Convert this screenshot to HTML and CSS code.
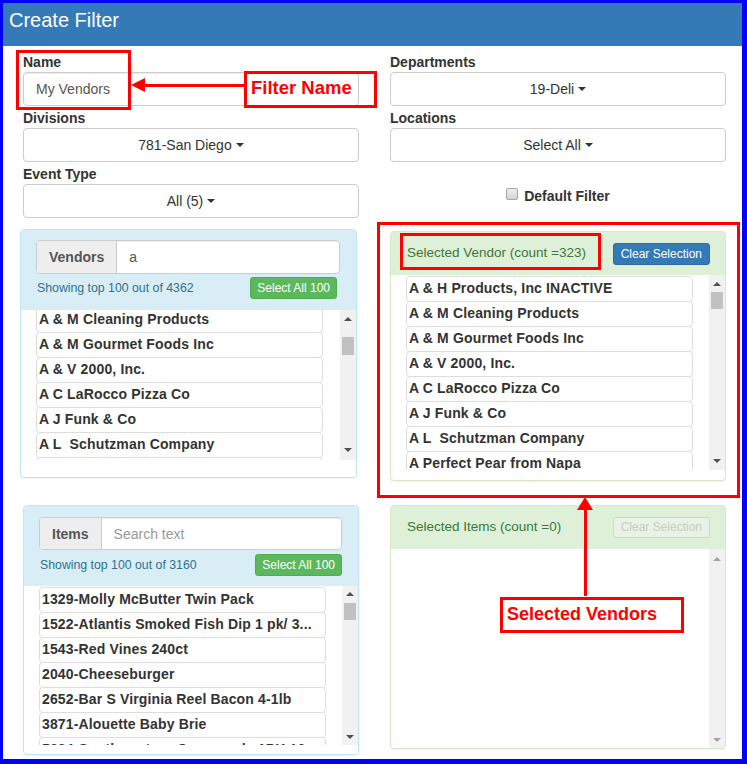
FILE: index.html
```html
<!DOCTYPE html>
<html>
<head>
<meta charset="utf-8">
<title>Create Filter</title>
<link rel="stylesheet" href="styles.css">
</head>
<body>
<div class="frame">
  <div class="hdr">Create Filter</div>
  <div class="content">
    <div class="field">
      <label class="lbl">Name</label>
      <div class="ctl txt">My Vendors</div>
    </div>
    <div class="field">
      <label class="lbl">Departments</label>
      <div class="ctl dd">19-Deli<span class="caret"></span></div>
    </div>
    <div class="field">
      <label class="lbl">Divisions</label>
      <div class="ctl dd">781-San Diego<span class="caret"></span></div>
    </div>
    <div class="field">
      <label class="lbl">Locations</label>
      <div class="ctl dd">Select All<span class="caret"></span></div>
    </div>
    <div class="field">
      <label class="lbl">Event Type</label>
      <div class="ctl dd">All (5)<span class="caret"></span></div>
    </div>
    <div class="deffilter"><span class="cbox"></span>Default Filter</div>

    <div class="panel p-info vend">
      <div class="search">
        <div class="ig"><span class="addon">Vendors</span><span class="ig-in">a</span></div>
        <div class="info"><span>Showing top 100 out of 4362</span><span class="btn-s btn-g">Select All 100</span></div>
      </div>
      <div class="lb">
        <div class="lcol">
          <div class="li">A &amp; M Cleaning Products</div>
          <div class="li">A &amp; M Gourmet Foods Inc</div>
          <div class="li">A &amp; V 2000, Inc.</div>
          <div class="li">A C LaRocco Pizza Co</div>
          <div class="li">A J Funk &amp; Co</div>
          <div class="li">A L&nbsp; Schutzman Company</div>
          <div class="li">A Perfect Pear from Napa</div>
        </div>
        <div class="sb"><span class="up"></span><span class="thumb"></span><span class="dn"></span></div>
      </div>
    </div>

    <div class="panel p-succ selv">
      <div class="sh"><span>Selected Vendor (count =323)</span><span class="btn-s btn-b">Clear Selection</span></div>
      <div class="lb">
        <div class="lcol">
          <div class="li">A &amp; H Products, Inc INACTIVE</div>
          <div class="li">A &amp; M Cleaning Products</div>
          <div class="li">A &amp; M Gourmet Foods Inc</div>
          <div class="li">A &amp; V 2000, Inc.</div>
          <div class="li">A C LaRocco Pizza Co</div>
          <div class="li">A J Funk &amp; Co</div>
          <div class="li">A L&nbsp; Schutzman Company</div>
          <div class="li">A Perfect Pear from Napa</div>
          <div class="li">A Taste of Europe</div>
        </div>
        <div class="sb"><span class="up"></span><span class="thumb"></span><span class="dn"></span></div>
      </div>
    </div>

    <div class="panel p-info items">
      <div class="search">
        <div class="ig"><span class="addon">Items</span><span class="ig-in ph">Search text</span></div>
        <div class="info"><span>Showing top 100 out of 3160</span><span class="btn-s btn-g">Select All 100</span></div>
      </div>
      <div class="lb">
        <div class="lcol">
          <div class="li">1329-Molly McButter Twin Pack</div>
          <div class="li">1522-Atlantis Smoked Fish Dip 1 pk/ 3...</div>
          <div class="li">1543-Red Vines 240ct</div>
          <div class="li">2040-Cheeseburger</div>
          <div class="li">2652-Bar S Virginia Reel Bacon 4-1lb</div>
          <div class="li">3871-Alouette Baby Brie</div>
          <div class="li">5624-Southwestern Guacamole 1PK 10...</div>
        </div>
        <div class="sb"><span class="up"></span><span class="thumb"></span><span class="dn"></span></div>
      </div>
    </div>

    <div class="panel p-succ seli">
      <div class="sh"><span>Selected Items (count =0)</span><span class="btn-s btn-dis">Clear Selection</span></div>
      <div class="lb">
        <div class="lcol"></div>
        <div class="sb sb-off"><span class="up"></span><span class="dn"></span></div>
      </div>
    </div>
  </div>

  <div class="ann a-name"></div>
  <div class="arrow-h-line"></div>
  <div class="arrow-h-head"></div>
  <div class="ann a-fname">Filter Name</div>

  <div class="ann a-big"></div>
  <div class="ann a-small"></div>
  <div class="arrow-v-head"></div>
  <div class="arrow-v-line"></div>
  <div class="ann a-selv">Selected Vendors</div>
</div>
</body>
</html>
```

FILE: styles.css
```css
* { box-sizing: border-box; }

body {
  margin: 0;
  font-family: "Liberation Sans", Arial, sans-serif;
  font-size: 14px;
  color: #333;
  background: #fff;
}

.frame {
  position: relative;
  width: 747px;
  height: 764px;
  border-style: solid;
  border-color: #0000ff;
  border-width: 3px 5px 5px 3px;
  overflow: hidden;
  background: #fff;
}

.hdr {
  height: 43px;
  background: #337ab7;
  color: #fff;
  font-size: 20px;
  line-height: 22px;
  padding: 6px 6px 0;
}

.content {
  display: grid;
  grid-template-columns: 336px 336px;
  column-gap: 31px;
  padding: 6px 0 0 20px;
  align-items: start;
}

.field { margin-bottom: 2px; }

.lbl {
  display: block;
  font-weight: bold;
  line-height: 20px;
  height: 20px;
}

.ctl {
  height: 34px;
  border: 1px solid #ccc;
  border-radius: 4px;
  background: #fff;
}

.txt {
  padding: 0 12px;
  line-height: 32px;
  color: #555;
  box-shadow: inset 0 1px 1px rgba(0,0,0,.075);
}

.dd {
  display: flex;
  align-items: center;
  justify-content: center;
  color: #333;
}

.caret {
  display: inline-block;
  width: 0;
  height: 0;
  border-top: 4px solid #333;
  border-left: 4px solid transparent;
  border-right: 4px solid transparent;
  margin-left: 4px;
}

.deffilter {
  height: 54px;
  padding-top: 22px;
  display: flex;
  justify-content: center;
  align-items: flex-start;
  line-height: 20px;
  font-weight: bold;
}

.cbox {
  width: 12px;
  height: 12px;
  border: 1px solid #a6a6a6;
  border-radius: 2px;
  background: linear-gradient(#eeeeee, #d4d4d4);
  margin: 2px 6px 0 0;
}

/* panels */
.panel {
  border: 1px solid;
  border-radius: 4px;
  background: #fff;
  overflow: hidden;
  box-shadow: 0 1px 1px rgba(0,0,0,.05);
}
.p-info { border-color: #bce8f1; }
.p-succ { border-color: #d6e9c6; }

.vend { margin: 9px 0 0 -3px; width: 337px; height: 249px; }
.selv { margin-top: 11px; height: 250px; }
.items { margin-top: 24px; height: 250px; }
.seli { margin-top: 24px; height: 244px; }

.search { background: #d9edf7; }
.vend .search { padding: 10px 16px 11px 15px; }
.items .search { padding: 11px 16px 10px 15px; }

.ig {
  display: flex;
  height: 34px;
  border: 1px solid #ccc;
  border-radius: 4px;
  background: #fff;
  overflow: hidden;
}
.items .ig { height: 33px; }

.addon {
  background: #eee;
  border-right: 1px solid #ccc;
  padding: 0 12px;
  font-weight: bold;
  color: #555;
  display: flex;
  align-items: center;
}

.ig-in {
  flex: 1;
  padding: 0 12px;
  display: flex;
  align-items: center;
  color: #555;
  box-shadow: inset 0 1px 1px rgba(0,0,0,.075);
}
.ig-in.ph { color: #999; }

.info {
  display: flex;
  justify-content: space-between;
  align-items: center;
  height: 22px;
  margin-top: 3px;
  font-size: 12.3px;
  color: #31708f;
  padding-left: 1px;
}
.items .info { margin-top: 4px; }

.btn-s {
  display: inline-block;
  height: 22px;
  line-height: 20px;
  font-size: 12px;
  padding: 0 6px;
  border-radius: 3px;
  border: 1px solid;
  white-space: nowrap;
}
.btn-g { background: #5cb85c; border-color: #4cae4c; color: #fff; }
.vend .btn-g { margin-right: 3px; }
.btn-b { background: #337ab7; border-color: #2e6da4; color: #fff; padding: 0 7px; }
.btn-dis { background: #e9f2e6; border-color: #cfd9cb; color: #c5cdc2; padding: 0 7px; height: 21px; line-height: 19px; }

.sh {
  height: 43px;
  background: #dff0d8;
  color: #3c763d;
  display: flex;
  align-items: center;
  justify-content: space-between;
  padding: 0 15px 2px 16px;
  font-size: 13.5px;
}
.sh .btn-s { margin-top: 2px; }

/* lists */
.lb { display: flex; }
.vend .lb { height: 150px; }
.items .lb { height: 159px; }
.selv .lb { height: 195px; }
.seli .lb { height: 199px; }

.lcol {
  flex: 1;
  overflow: hidden;
  padding: 0 16px 0 15px;
}
.vend .lcol { padding-right: 17px; }
.vend .li:first-child { margin-top: -3px; }
.items .li:first-child,
.selv .li:first-child { margin-top: 1px; }

.li {
  height: 26px;
  border: 1px solid #ddd;
  border-radius: 4px;
  margin-bottom: -1px;
  padding: 0 2px;
  font-weight: bold;
  line-height: 23px;
  letter-spacing: 0.15px;
  white-space: nowrap;
  overflow: hidden;
  color: #333;
  background: #fff;
}

/* scrollbars */
.sb {
  width: 16px;
  background: #f1f1f1;
  display: flex;
  flex-direction: column;
  align-items: center;
}
.up, .dn {
  width: 0;
  height: 0;
  border-left: 4px solid transparent;
  border-right: 4px solid transparent;
}
.up { border-bottom: 4px solid #505050; }
.dn { border-top: 4px solid #505050; margin-top: auto; }
.thumb { width: 12px; background: #c1c1c1; }

.vend .up { margin-top: 7px; }
.vend .thumb { margin-top: 16px; height: 18px; }
.vend .dn { margin-bottom: 8px; }

.selv .up { margin-top: 7px; }
.selv .thumb { margin-top: 6px; height: 17px; }
.selv .dn { margin-bottom: 7px; }

.items .up { margin-top: 6px; }
.items .thumb { margin-top: 7px; height: 17px; }
.items .dn { margin-bottom: 6px; }

.sb-off .up { margin-top: 8px; border-bottom-color: #a3a3a3; }
.sb-off .dn { margin-bottom: 6px; border-top-color: #a3a3a3; }

/* annotations */
.ann {
  position: absolute;
  border: 3px solid #ff0000;
  color: #ff0000;
  font-weight: bold;
  white-space: nowrap;
}
.a-name { left: 13px; top: 47px; width: 115px; height: 60px; }
.a-fname {
  left: 241px; top: 68px; width: 133px; height: 37px;
  font-size: 18.5px; line-height: 28px; padding-left: 4px;
}
.arrow-h-line {
  position: absolute;
  left: 141px; top: 81px; width: 100px; height: 3px;
  background: #ff0000;
}
.arrow-h-head {
  position: absolute;
  left: 128px; top: 75px;
  width: 0; height: 0;
  border-right: 14px solid #ff0000;
  border-top: 7.5px solid transparent;
  border-bottom: 7.5px solid transparent;
}
.a-big { left: 374px; top: 219px; width: 363px; height: 276px; }
.a-small { left: 397px; top: 230px; width: 201px; height: 37px; }
.arrow-v-head {
  position: absolute;
  left: 574px; top: 494px;
  width: 0; height: 0;
  border-bottom: 13px solid #ff0000;
  border-left: 8px solid transparent;
  border-right: 8px solid transparent;
}
.arrow-v-line {
  position: absolute;
  left: 581px; top: 506px; width: 3px; height: 87px;
  background: #ff0000;
}
.a-selv {
  left: 497px; top: 594px; width: 184px; height: 36px;
  font-size: 18px; line-height: 29px; padding-left: 4px;
}
```
